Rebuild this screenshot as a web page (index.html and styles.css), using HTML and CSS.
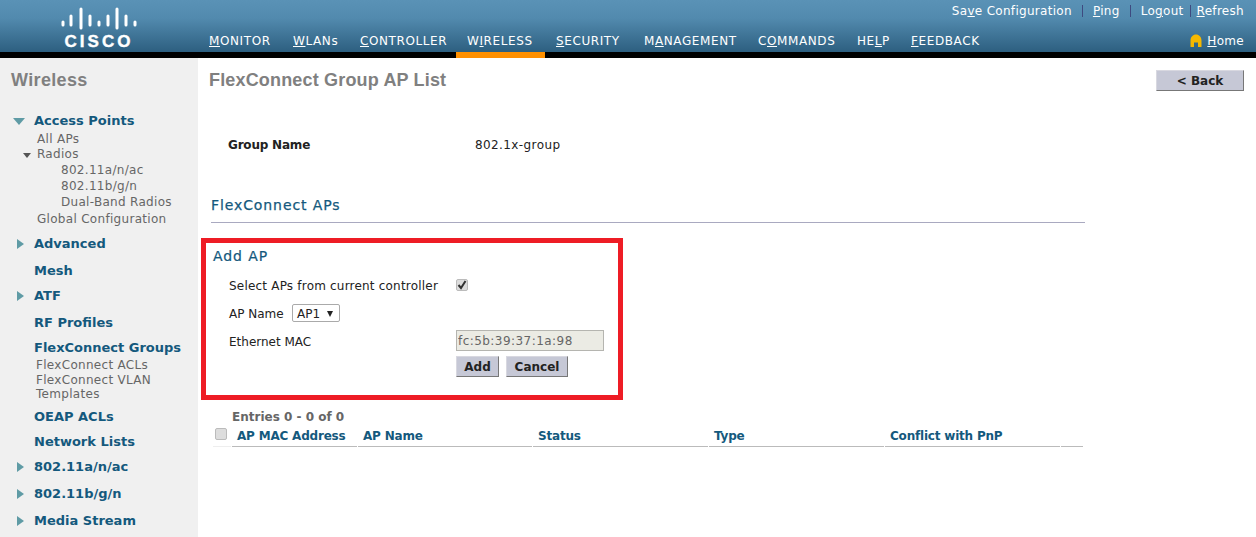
FILE: index.html
```html
<!DOCTYPE html>
<html lang="en">
  <head>
    <meta charset="UTF-8" />
    <title>FlexConnect Group AP List</title>
    <link rel="stylesheet" href="styles.css">
  </head>
  <body>
    <header class="topbar">
      <div class="logo">
        <svg class="logo-bars" width="76" height="23" viewBox="0 0 76 23">
          <g stroke="#fff" stroke-width="3" stroke-linecap="round">
            <line x1="2" y1="15" x2="2" y2="18" />
            <line x1="10" y1="9" x2="10" y2="18" />
            <line x1="20" y1="2" x2="20" y2="21" />
            <line x1="29" y1="9" x2="29" y2="18" />
            <line x1="38" y1="15" x2="38" y2="18" />
            <line x1="47" y1="9" x2="47" y2="18" />
            <line x1="56" y1="2" x2="56" y2="21" />
            <line x1="65" y1="9" x2="65" y2="18" />
            <line x1="74" y1="15" x2="74" y2="18" />
          </g>
        </svg>
        <span class="logo-text">CISCO</span>
      </div>
      <div class="topbar-right">
        <div class="util-links">
          <a href="#">Sa<u>v</u>e Configuration</a><i class="sep sep-wide"></i><a href="#"><u>P</u>ing</a><i class="sep sep-wide"></i><a href="#">Lo<u>g</u>out</a><i class="sep"></i><a href="#"><u>R</u>efresh</a>
        </div>
        <nav class="main-nav">
          <a href="#"><u>M</u>ONITOR</a>
          <a href="#"><u>W</u>LANs</a>
          <a href="#"><u>C</u>ONTROLLER</a>
          <a class="active" href="#">W<u>I</u>RELESS</a>
          <a href="#"><u>S</u>ECURITY</a>
          <a href="#">M<u>A</u>NAGEMENT</a>
          <a href="#">C<u>O</u>MMANDS</a>
          <a href="#">HE<u>L</u>P</a>
          <a href="#"><u>F</u>EEDBACK</a>
          <a class="home" href="#">
            <svg width="12" height="14" viewBox="0 0 12 14"><path d="M0.500 13V6.500C0.500 3 3 0.500 6 0.500s5.500 2.500 5.500 6V13H8V8.500H4V13z" fill="#f5b800" /></svg>
            <span><u>H</u>ome</span>
          </a>
        </nav>
      </div>
    </header>

    <div class="page">
      <aside class="sidebar">
        <h2>Wireless</h2>
        <ul class="side-menu">
          <li class="head first"><i class="arrow down"></i>Access Points</li>
          <li class="sub">All APs</li>
          <li class="sub"><i class="arrow small"></i>Radios</li>
          <li class="sub deep">802.11a/n/ac</li>
          <li class="sub deep">802.11b/g/n</li>
          <li class="sub deep">Dual-Band Radios</li>
          <li class="sub last">Global Configuration</li>
          <li class="head has-arrow"><i class="arrow"></i>Advanced</li>
          <li class="head">Mesh</li>
          <li class="head has-arrow"><i class="arrow"></i>ATF</li>
          <li class="head">RF Profiles</li>
          <li class="head">FlexConnect Groups</li>
          <li class="sub tight">FlexConnect ACLs</li>
          <li class="sub tight">FlexConnect VLAN Templates</li>
          <li class="head">OEAP ACLs</li>
          <li class="head">Network Lists</li>
          <li class="head has-arrow"><i class="arrow"></i>802.11a/n/ac</li>
          <li class="head has-arrow"><i class="arrow"></i>802.11b/g/n</li>
          <li class="head has-arrow"><i class="arrow"></i>Media Stream</li>
        </ul>
      </aside>

      <main class="content">
        <div class="title-row">
          <h1>FlexConnect Group AP List</h1>
          <button class="btn btn-back">&lt; Back</button>
        </div>

        <div class="group-row">
          <b>Group Name</b>
          <span>802.1x-group</span>
        </div>

        <h3 class="section-title">FlexConnect APs</h3>

        <section class="add-box">
          <h3>Add AP</h3>
          <div class="form-row row-select">
            <label>Select APs from current controller</label>
            <span class="check"><svg width="10" height="10" viewBox="0 0 10 10"><path d="M1.500 5l2.500 3L8.500 1" fill="none" stroke="#333" stroke-width="2" /></svg></span>
          </div>
          <div class="form-row row-name">
            <label>AP Name</label>
            <span class="select">AP1 <i></i></span>
          </div>
          <div class="form-row row-mac">
            <label>Ethernet MAC</label>
            <div class="mac-col">
              <input class="mac" type="text" value="fc:5b:39:37:1a:98" readonly>
              <div class="mac-buttons">
                <button class="btn btn-add">Add</button>
                <button class="btn btn-cancel">Cancel</button>
              </div>
            </div>
          </div>
        </section>

        <p class="entries">Entries 0 - 0 of 0</p>
        <div class="ap-table">
          <div class="cell cell-check"><span class="check blank"></span></div>
          <div class="cell">AP MAC Address</div>
          <div class="cell">AP Name</div>
          <div class="cell">Status</div>
          <div class="cell">Type</div>
          <div class="cell">Conflict with PnP</div>
          <div class="cell"></div>
        </div>
      </main>
    </div>
  </body>
</html>
```

FILE: styles.css
```css
* {
  box-sizing: border-box;
  margin: 0;
  padding: 0;
}

html, body {
  height: 100%;
  overflow: hidden;
}

body {
  display: flex;
  flex-direction: column;
  background-color: #fff;
  color: #222;
  font-family: "DejaVu Sans", sans-serif;
  font-size: 12px;
}

a {
  color: #fff;
  text-decoration: none;
}

/* header */
.topbar {
  display: flex;
  flex: none;
  height: 58px;
  border-bottom: 6px solid #000;
  background: linear-gradient(#5a92b6, #528aae 35%, #2d5f80);
}

.logo {
  display: flex;
  flex-direction: column;
  align-items: center;
  width: 198px;
  padding-top: 7px;
  color: #fff;
}

.logo-bars {
  display: block;
}

.logo-text {
  margin-top: 2px;
  font-family: "Liberation Sans", sans-serif;
  font-size: 17px;
  font-weight: bold;
  line-height: 20px;
  letter-spacing: 3px;
  -webkit-text-stroke: .4px #fff;
}

.topbar-right {
  flex: 1;
  display: flex;
  flex-direction: column;
  min-width: 0;
}

.util-links {
  display: flex;
  justify-content: flex-end;
  align-items: center;
  height: 22px;
  padding-right: 12px;
  font-size: 12px;
  letter-spacing: .3px;
}

.sep {
  display: inline-block;
  width: 1px;
  height: 12px;
  margin: 0 6px;
  background-color: #3e4a80;
}

.sep-wide {
  margin: 0 10px;
}

.main-nav {
  display: grid;
  grid-template-columns: 84px 67px 107px 89px 88px 114px 99px 54px 1fr auto;
  grid-template-rows: 30px;
  font-size: 12px;
  letter-spacing: .6px;
}

.main-nav a {
  position: relative;
  padding-left: 11px;
  line-height: 39px;
  white-space: nowrap;
}

.main-nav a.active::after {
  content: "";
  position: absolute;
  left: 0;
  right: 0;
  bottom: -6px;
  height: 6px;
  background-color: #ff9000;
}

.main-nav .home {
  grid-column: 10;
  display: flex;
  align-items: center;
  gap: 5px;
  padding: 8px 12px 0 0;
  line-height: normal;
  letter-spacing: .3px;
}

/* layout */
.page {
  flex: 1;
  display: flex;
  min-height: 0;
}

.sidebar {
  flex: none;
  width: 198px;
  padding: 12px 0 0 11px;
  background-color: #f0f0f0;
}

.sidebar h2 {
  color: #808080;
  font-family: "Liberation Sans", sans-serif;
  font-size: 18px;
  letter-spacing: .35px;
  line-height: 21px;
}

.side-menu {
  list-style: none;
  margin-top: 22px;
}

.side-menu li {
  position: relative;
}

.head {
  margin-top: 9px;
  padding-left: 23px;
  color: #14597d;
  font-size: 13px;
  font-weight: bold;
  line-height: 16px;
}

.head.first {
  margin-top: 0;
}

.head.has-arrow {
  padding-bottom: 2px;
}

.sub {
  padding-left: 26px;
  color: #666;
  letter-spacing: .3px;
  line-height: 15px;
}

.head + .sub {
  margin-top: 3px;
}

.deep {
  padding-left: 50px;
  line-height: 16px;
}

.sub.last {
  margin-top: 2px;
}

.tight {
  padding-left: 25px;
  line-height: 14.500px;
}

.head + .tight {
  margin-top: 2px;
}

.tight + .head {
  margin-top: 7px;
}

.arrow {
  position: absolute;
  left: 6px;
  top: 3px;
  width: 0;
  height: 0;
  border-left: 7px solid #5f9ba5;
  border-top: 5px solid transparent;
  border-bottom: 5px solid transparent;
}

.arrow.down {
  left: 2px;
  top: 5px;
  border-top: 7px solid #5f9ba5;
  border-left: 6px solid transparent;
  border-right: 6px solid transparent;
  border-bottom: 0;
}

.arrow.small {
  left: 12px;
  top: 6px;
  border-top: 5px solid #555;
  border-left: 4px solid transparent;
  border-right: 4px solid transparent;
  border-bottom: 0;
}

/* main area */
.content {
  flex: 1;
  min-width: 0;
  padding: 12px 12px 0 11px;
}

.title-row {
  display: flex;
  justify-content: space-between;
  align-items: flex-start;
}

h1 {
  color: #808080;
  font-family: "Liberation Sans", sans-serif;
  font-size: 18px;
  letter-spacing: .17px;
  line-height: 21px;
}

.btn {
  height: 21px;
  padding: 0;
  border: 1px solid;
  border-color: #d8d8e0 #777 #777 #d8d8e0;
  background-color: #c6c8d6;
  color: #222;
  font-family: "DejaVu Sans", sans-serif;
  font-size: 12px;
  font-weight: bold;
}

.btn-back {
  width: 88px;
}

.group-row {
  display: flex;
  margin: 46px 0 0 19px;
  line-height: 16px;
}

.group-row b {
  width: 247px;
  letter-spacing: -.2px;
}

.group-row span {
  letter-spacing: .4px;
}

.section-title {
  width: 874px;
  margin: 43px 0 0 2px;
  padding-bottom: 8px;
  border-bottom: 1px solid #a9a9c0;
  color: #14597d;
  font-size: 14px;
  font-weight: normal;
  letter-spacing: .9px;
  line-height: 18px;
  -webkit-text-stroke: .25px #14597d;
}

.add-box {
  width: 422px;
  height: 162px;
  margin: 15px 0 0 -8px;
  padding: 4px 0 0 7px;
  border: 5px solid #ee1c25;
}

.add-box h3 {
  color: #14597d;
  font-size: 14px;
  font-weight: normal;
  letter-spacing: .9px;
  line-height: 18px;
  -webkit-text-stroke: .2px #14597d;
}

.form-row {
  display: flex;
  padding-left: 16px;
}

.row-select {
  align-items: center;
  height: 18px;
  margin-top: 11px;
}

.row-select label {
  width: 227px;
  padding-top: 1px;
  letter-spacing: .2px;
}

.check {
  display: flex;
  align-items: center;
  justify-content: center;
  width: 12px;
  height: 12px;
  border: 1px solid #bbb;
  border-radius: 2px;
  background-color: #ddd;
}

.row-name {
  align-items: center;
  margin-top: 10px;
}

.row-name label {
  width: 63px;
  padding-top: 1px;
}

.select {
  display: flex;
  align-items: center;
  justify-content: space-between;
  width: 48px;
  height: 18px;
  padding: 1px 6px 0 4px;
  border: 1px solid #aaa;
  border-radius: 2px;
}

.select i {
  width: 0;
  height: 0;
  border-top: 6px solid #222;
  border-left: 3px solid transparent;
  border-right: 3px solid transparent;
}

.row-mac {
  margin-top: 8px;
}

.row-mac label {
  width: 227px;
  padding-top: 5px;
}

.mac {
  display: block;
  width: 148px;
  height: 21px;
  padding: 0 1px;
  border: 1px solid #b5b5b0;
  background-color: #ebebe4;
  color: #666;
  font-family: "DejaVu Sans", sans-serif;
  font-size: 12px;
  letter-spacing: .45px;
}

.mac-buttons {
  display: flex;
  gap: 7px;
  margin-top: 5px;
}

.btn-add {
  width: 43px;
}

.btn-cancel {
  width: 62px;
}

.entries {
  margin: 9px 0 0 23px;
  color: #666;
  font-weight: bold;
  line-height: 16px;
}

.ap-table {
  display: grid;
  grid-template-columns: 19px 126px 175px 176px 176px 176px 23px;
  width: 871px;
  margin: 3px 0 0 4px;
}

.cell {
  height: 19px;
  margin-right: 1px;
  padding-left: 5px;
  border-bottom: 1px solid #bbb;
  color: #14597d;
  font-weight: bold;
  letter-spacing: -.2px;
  line-height: 16px;
}

.cell-check {
  padding-left: 2px;
  border-bottom-color: #eee;
}
```
